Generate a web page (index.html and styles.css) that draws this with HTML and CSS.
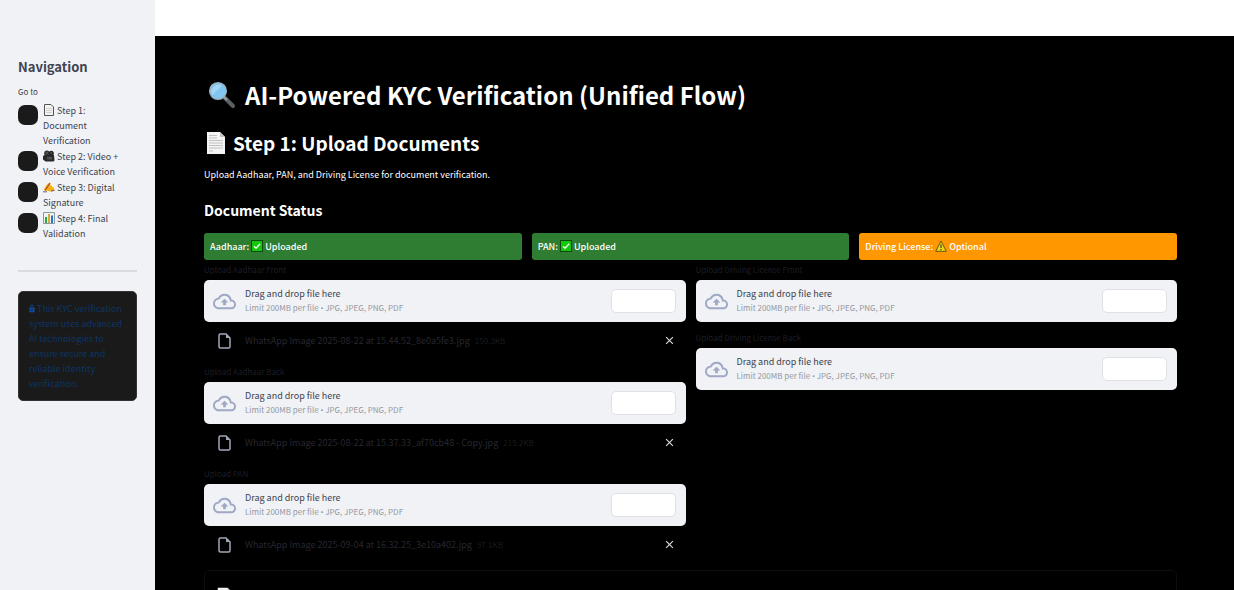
FILE: index.html
```html
<!DOCTYPE html>
<html lang="en">
<head>
<meta charset="utf-8">
<meta name="viewport" content="width=device-width, initial-scale=1">
<title>AI-Powered KYC Verification</title>
<link rel="stylesheet" href="styles.css">
</head>
<body>
<svg class="defs" aria-hidden="true">
  <symbol id="page" viewBox="0 0 20 22">
    <path d="M1 0h13l5 5v17H1z" fill="#f4f4f4"/>
    <path d="M14 0v5h5z" fill="#c4c4c4"/>
    <path d="M3 3.500h8M3 6h8M3 8.500h14M3 11h14M3 13.500h14M3 16h14M3 19h4" stroke="#b4b4b4" stroke-width=".8"/>
  </symbol>
  <symbol id="cloud" viewBox="0 0 24 24">
    <path fill="currentColor" d="M19.350 10.040A7.490 7.490 0 0 0 12 4C9.110 4 6.600 5.640 5.350 8.040A5.994 5.994 0 0 0 0 14c0 3.310 2.690 6 6 6h13c2.760 0 5-2.240 5-5 0-2.640-2.050-4.780-4.650-4.960zM19 18H6c-2.210 0-4-1.790-4-4 0-2.050 1.530-3.760 3.560-3.970l1.070-.110.500-.950A5.469 5.469 0 0 1 12 6c2.620 0 4.880 1.860 5.390 4.430l.300 1.500 1.530.110A2.980 2.980 0 0 1 22 15c0 1.650-1.350 3-3 3zM8 13h2.550v3h2.900v-3H16l-4-4z"/>
  </symbol>
  <symbol id="file" viewBox="0 0 14 16">
    <path d="M2.500 1h5.500l4 4v8.500a1.500 1.500 0 0 1-1.500 1.500h-8A1.500 1.500 0 0 1 1 13.500v-11A1.500 1.500 0 0 1 2.500 1z" fill="none" stroke="currentColor" stroke-width="1.500"/>
    <path d="M8 1v4h4z" fill="currentColor"/>
  </symbol>
  <symbol id="check" viewBox="0 0 12 12">
    <rect x=".5" y=".5" width="11" height="11" fill="#16c60c" stroke="#0a4a0a"/>
    <path d="M3 6.300l2 2L9.200 3.700" fill="none" stroke="#e8ffe8" stroke-width="1.300"/>
  </symbol>
</svg>
<div class="app">
  <aside class="sidebar">
    <h2 class="nav-title">Navigation</h2>
    <fieldset class="steps">
      <legend>Go to</legend>
      <label class="step"><input type="radio" name="step" checked><span><svg class="emoji" viewBox="0 0 12 12"><path d="M1.500.5h6.500l2.500 2.500v8.500h-9z" fill="#f3f3ee" stroke="#555"/><path d="M3 4.500h6M3 6.500h6M3 8.500h6" stroke="#bbb" stroke-width=".6"/></svg> Step 1: Document Verification</span></label>
      <label class="step"><input type="radio" name="step"><span><svg class="emoji" viewBox="0 0 12 12"><circle cx="4" cy="3.200" r="2.800" fill="#333"/><circle cx="8.300" cy="3.300" r="2.500" fill="#222"/><path d="M1.500 5h9.500l.5 5.500-1 1H2.500L0 9.500V6z" fill="#292929"/><circle cx="4" cy="3" r=".8" fill="#777"/><circle cx="8.300" cy="3" r=".8" fill="#777"/><path d="M4 7h5v2.500H4z" fill="#505050"/></svg> Step 2: Video + Voice Verification</span></label>
      <label class="step"><input type="radio" name="step"><span><svg class="emoji" viewBox="0 0 12 12"><path d="M.5 9l3-5 3-2.500 1 2.500 3.500 3 .5 2.500-4 1z" fill="#fbae1c"/><path d="M2 9.500L7 2" stroke="#a8501c" stroke-width="1.300"/><path d="M0 10.800h4M8 10l3.500-.5" stroke="#444" stroke-width=".8"/></svg> Step 3: Digital Signature</span></label>
      <label class="step"><input type="radio" name="step"><span><svg class="emoji" viewBox="0 0 12 12"><path d="M.5.5h11v11H.5z" fill="#eef4f6" stroke="#7f8f98" stroke-width=".9"/><path d="M2 5h2v6H2z" fill="#27a844"/><path d="M5 2h2v9H5z" fill="#e0a43a"/><path d="M8 3.500h2V11H8z" fill="#2378c3"/></svg> Step 4: Final Validation</span></label>
    </fieldset>
    <hr class="rule">
    <p class="notice"><svg class="lock" viewBox="0 0 7 10"><path d="M2 4V2.500a1.500 1.500 0 0 1 3 0V4" fill="none" stroke="currentColor"/><path d="M.5 4h6v5.500h-6z" fill="currentColor"/><circle cx="3.500" cy="6.500" r="1" fill="#1a1a1a"/></svg> This KYC verification system uses advanced AI technologies to ensure secure and reliable identity verification.</p>
  </aside>
  <main class="main">
    <div class="content">
      <h1 class="title"><svg class="title-icon" viewBox="0 0 28 28"><path d="M17 17l8 8" stroke="#5d6063" stroke-width="4" stroke-linecap="round"/><path d="M16 16l3 3" stroke="#9a9da0" stroke-width="2"/><circle cx="10" cy="10" r="8.300" fill="#83c5f1" stroke="#9bb4c4" stroke-width="1.500"/><path d="M4.500 14L14 4.500a7 7 0 0 0-9.500 9.500z" fill="#a3d5f5"/></svg>AI-Powered KYC Verification (Unified Flow)</h1>
      <h2 class="heading"><svg class="heading-icon"><use href="#page"/></svg>Step 1: Upload Documents</h2>
      <p class="intro">Upload Aadhaar, PAN, and Driving License for document verification.</p>
      <h3 class="subheading">Document Status</h3>
      <div class="statuses">
        <div class="status">Aadhaar: <svg class="mark"><use href="#check"/></svg> Uploaded</div>
        <div class="status">PAN: <svg class="mark"><use href="#check"/></svg> Uploaded</div>
        <div class="status optional">Driving License: <svg class="mark" viewBox="0 0 12 12"><path d="M6 1l5.300 10.300H.7z" fill="#e8d81c" stroke="#5c4a08" stroke-width=".9"/><path d="M6 4.500v3.500M6 9v1.200" stroke="#333" stroke-width="1.100"/></svg> Optional</div>
      </div>
      <div class="columns">
        <div class="column">
          <section class="uploader">
            <label class="label" for="aadhaar-front">Upload Aadhaar Front</label>
            <div class="dropzone"><svg class="cloud"><use href="#cloud"/></svg><div class="hint"><span>Drag and drop file here</span><small>Limit 200MB per file <span class="dot">•</span> JPG, JPEG, PNG, PDF</small></div><button class="browse" id="aadhaar-front" type="button"></button></div>
            <div class="file"><svg class="file-icon"><use href="#file"/></svg><span>WhatsApp Image 2025-08-22 at 15.44.52_8e0a5fe3.jpg</span><small>150.3KB</small><button class="remove" type="button" aria-label="Remove file"><svg viewBox="0 0 8 8"><path d="M1 1l6 6M7 1L1 7"/></svg></button></div>
          </section>
          <section class="uploader">
            <label class="label" for="aadhaar-back">Upload Aadhaar Back</label>
            <div class="dropzone"><svg class="cloud"><use href="#cloud"/></svg><div class="hint"><span>Drag and drop file here</span><small>Limit 200MB per file <span class="dot">•</span> JPG, JPEG, PNG, PDF</small></div><button class="browse" id="aadhaar-back" type="button"></button></div>
            <div class="file"><svg class="file-icon"><use href="#file"/></svg><span>WhatsApp Image 2025-08-22 at 15.37.33_af70cb48 - Copy.jpg</span><small>215.2KB</small><button class="remove" type="button" aria-label="Remove file"><svg viewBox="0 0 8 8"><path d="M1 1l6 6M7 1L1 7"/></svg></button></div>
          </section>
          <section class="uploader">
            <label class="label" for="pan">Upload PAN</label>
            <div class="dropzone"><svg class="cloud"><use href="#cloud"/></svg><div class="hint"><span>Drag and drop file here</span><small>Limit 200MB per file <span class="dot">•</span> JPG, JPEG, PNG, PDF</small></div><button class="browse" id="pan" type="button"></button></div>
            <div class="file"><svg class="file-icon"><use href="#file"/></svg><span>WhatsApp Image 2025-09-04 at 16.32.25_3e10a402.jpg</span><small>97.1KB</small><button class="remove" type="button" aria-label="Remove file"><svg viewBox="0 0 8 8"><path d="M1 1l6 6M7 1L1 7"/></svg></button></div>
          </section>
        </div>
        <div class="column">
          <section class="uploader">
            <label class="label" for="license-front">Upload Driving License Front</label>
            <div class="dropzone"><svg class="cloud"><use href="#cloud"/></svg><div class="hint"><span>Drag and drop file here</span><small>Limit 200MB per file <span class="dot">•</span> JPG, JPEG, PNG, PDF</small></div><button class="browse" id="license-front" type="button"></button></div>
          </section>
          <section class="uploader">
            <label class="label" for="license-back">Upload Driving License Back</label>
            <div class="dropzone"><svg class="cloud"><use href="#cloud"/></svg><div class="hint"><span>Drag and drop file here</span><small>Limit 200MB per file <span class="dot">•</span> JPG, JPEG, PNG, PDF</small></div><button class="browse" id="license-back" type="button"></button></div>
          </section>
        </div>
      </div>
      <section class="panel">
        <h3 class="panel-title"><svg class="panel-icon"><use href="#page"/></svg>Combined Details Identity Verification</h3>
      </section>
    </div>
  </main>
</div>
</body>
</html>
```
FILE: styles.css
```css
* { box-sizing: border-box; }
body {
  margin: 0;
  font-family: "Noto Sans CJK SC", "Noto Sans", sans-serif;
  font-size: 9px;
  line-height: 15px;
  color: #41434e;
  background: #fff;
}
h1, h2, h3, p { margin: 0; }
small { font-size: 8px; }
button { padding: 0; font: inherit; }
.defs { position: absolute; width: 0; height: 0; }
.app { display: flex; height: 100vh; overflow: hidden; }

.sidebar { flex: 0 0 155px; padding: 56px 18px 0; background: #f0f2f6; }
.nav-title { font-size: 13px; line-height: 22px; font-weight: 700; }
.steps { display: flex; flex-direction: column; gap: 1px; margin: 0; padding: 0 16px 0 0; border: 0; }
.steps legend { padding: 6px 0 4px; font-size: 8px; }
.step { display: flex; align-items: flex-start; gap: 5px; }
.step input {
  appearance: none;
  flex: none;
  width: 20px;
  height: 20px;
  margin: 2px 0 0;
  border-radius: 7px;
  background: #1a1a1a;
}
.emoji { width: 12px; height: 12px; vertical-align: -2px; }
.rule { height: 2px; margin: 29px 0 19px; border: 0; background: #d9dbe0; }
.notice {
  padding: 9px 10px;
  border: 1px solid #333;
  border-radius: 5px;
  color: #0b3565;
  background: #1a1a1a;
}
.lock { width: 6px; height: 9px; color: #0d4c9c; vertical-align: -1px; }

.main {
  flex: 1;
  min-width: 0;
  margin-top: 36px;
  overflow-y: auto;
  scrollbar-width: none;
  color: #fff;
  background: #000;
}
.content { padding: 39px 57px 40px 49px; }
.title, .heading, .panel-title { display: flex; align-items: center; }
.title { gap: 9px; padding-left: 4px; font-size: 24px; line-height: 40px; font-weight: 700; }
.title-icon { width: 28px; height: 28px; }
.heading { gap: 7px; margin-top: 12px; padding-left: 2px; font-size: 19px; line-height: 32px; font-weight: 700; }
.heading-icon { width: 20px; height: 22px; }
.intro { margin-top: 8px; font-weight: 400; }
.subheading { margin-top: 16px; font-size: 14px; line-height: 24px; font-weight: 700; }
.statuses { display: flex; gap: 10px; margin-top: 11px; }
.status { flex: 1; padding: 6px; border-radius: 3px; background: #2e7d32; font-weight: 500; }
.status.optional { background: #ff9800; }
.mark { width: 12px; height: 12px; vertical-align: -2px; }

.columns { display: flex; gap: 10px; margin-top: 3px; }
.column { flex: 1; min-width: 0; display: flex; flex-direction: column; gap: 9px; }
.uploader { display: flex; flex-direction: column; }
.label { margin-bottom: 3px; font-size: 8px; line-height: 14px; color: #1d1e25; }
.dropzone {
  display: flex;
  align-items: center;
  gap: 9px;
  padding: 7px 10px 7px 9px;
  border-radius: 5px;
  color: #41434e;
  background: #f0f2f6;
}
.cloud { width: 23px; height: 23px; color: #9fa8c4; }
.hint { display: flex; flex: 1; flex-direction: column; line-height: 14px; }
.hint small { color: #9698a0; }
.dot { font-family: "Open Sans", sans-serif; line-height: 1; }
.browse { width: 65px; height: 24px; border: 1px solid #dfe1e6; border-radius: 5px; background: #fff; }
.file { display: flex; align-items: center; height: 34px; padding: 3px 11px 0 14px; color: #26272f; }
.file-icon { width: 14px; height: 16px; margin-right: 13px; color: #a3a8b8; }
.file small { margin-left: 5px; color: #191a1f; }
.remove { width: 10px; height: 15px; margin-left: auto; border: 0; background: none; }
.remove svg { display: block; width: 9px; height: 15px; fill: none; stroke: #ddd; stroke-width: 1; }
.panel { margin-top: 10px; padding: 12px; border: 1px solid #0d0d0f; border-radius: 5px; }
.panel-title { gap: 5px; font-size: 14px; line-height: 26px; font-weight: 700; }
.panel-icon { width: 15px; height: 18px; }
```
